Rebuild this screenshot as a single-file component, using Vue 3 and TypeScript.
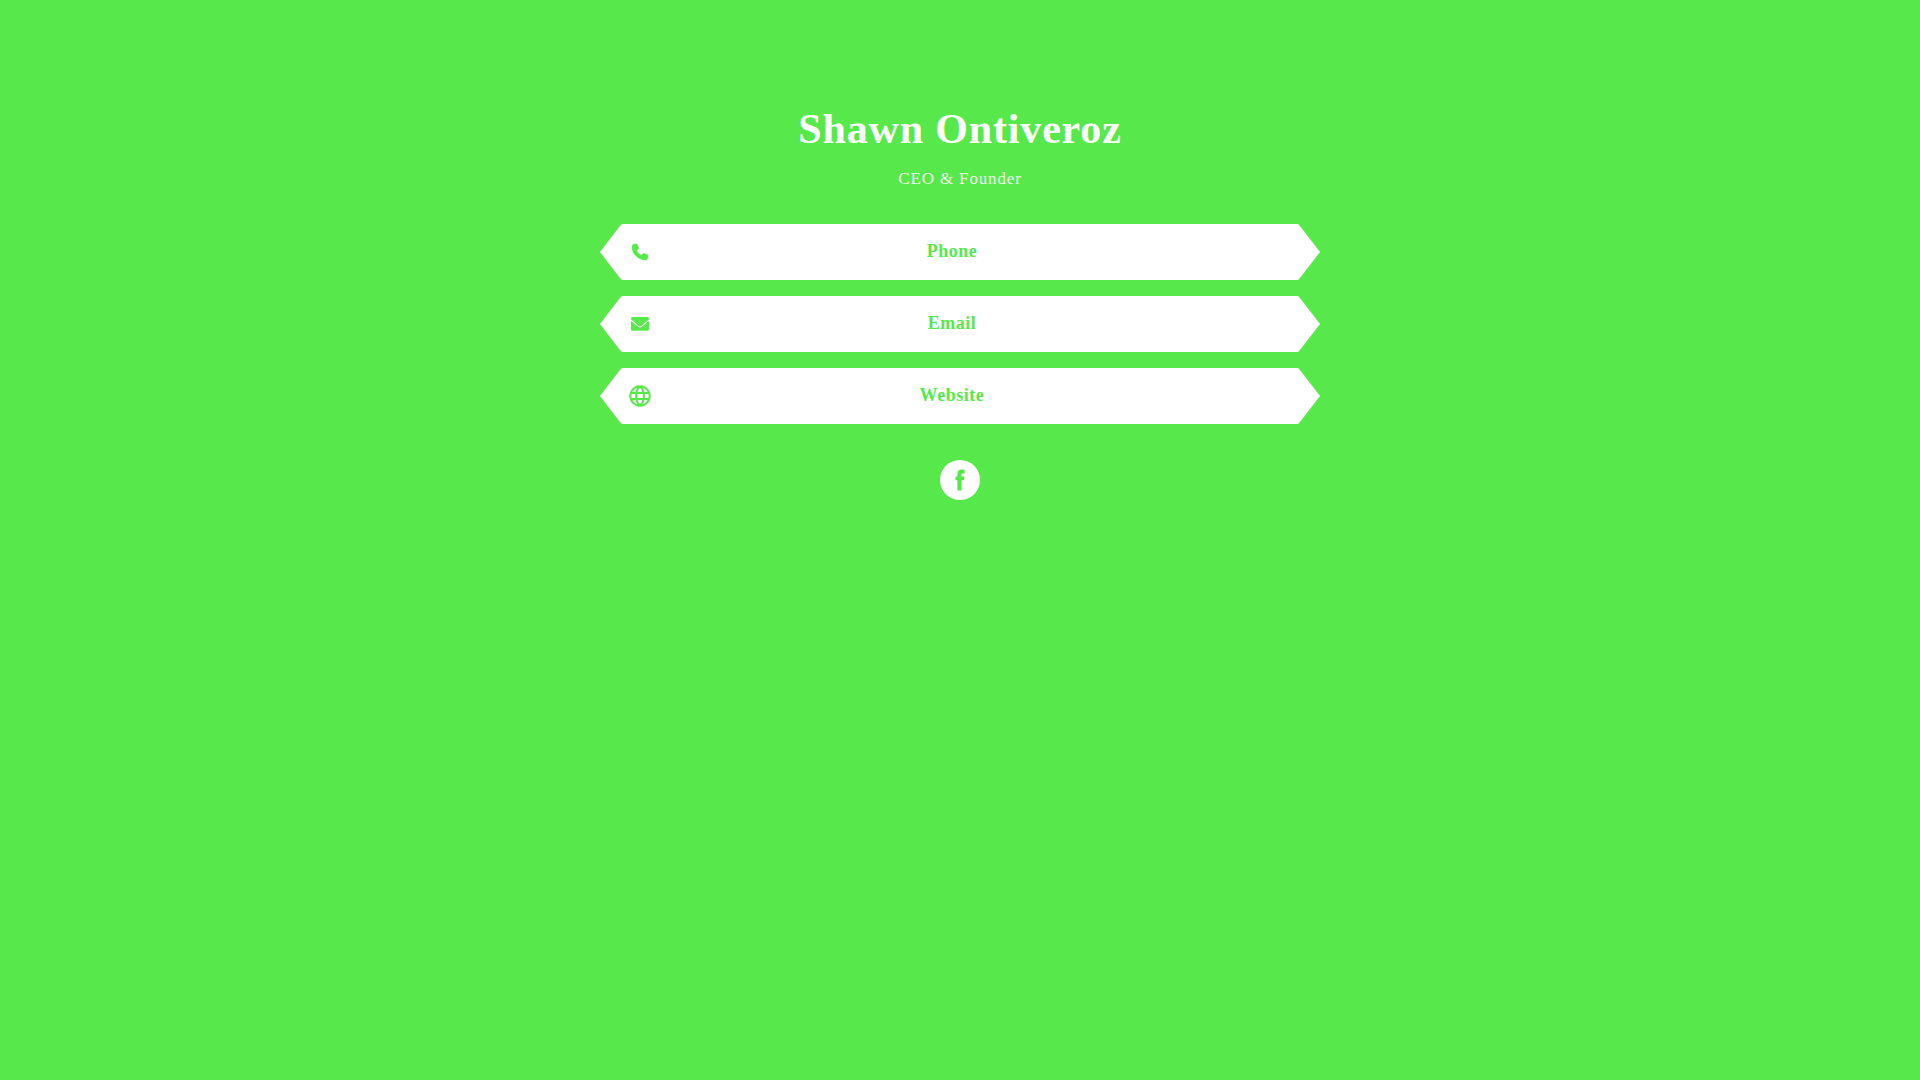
<script setup lang="ts">
interface ContactLink {
  label: string
  href: string
  viewBox: string
  size: number
  path: string
  variant: 'solid' | 'rounded' | 'stroked'
}

const links: ContactLink[] = [
  {
    label: 'Phone',
    href: '#phone',
    viewBox: '0 0 512 512',
    size: 16,
    variant: 'rounded',
    path: 'M164.9 24.6c-7.7-18.6-28-28.5-47.4-23.2l-88 24C12.1 30.2 0 46 0 64C0 311.4 200.6 512 448 512c18 0 33.8-12.1 38.6-29.5l24-88c5.3-19.4-4.6-39.7-23.2-47.4l-96-40c-16.3-6.8-35.2-2.1-46.3 11.6L304.7 368C234.3 334.7 177.3 277.7 144 207.3L193.3 167c13.7-11.2 18.4-30 11.6-46.3l-40-96z',
  },
  {
    label: 'Email',
    href: '#email',
    viewBox: '0 0 18 18',
    size: 18,
    variant: 'solid',
    path: 'M1.5 2h15Q18 2 18 3.5V4.2L10.2 10.9Q9 11.8 7.8 10.9L0 4.2V3.5Q0 2 1.5 2ZM0 5.7L7.1 11.7Q9 13.2 10.9 11.7L18 5.7V14.3Q18 15.8 16.5 15.8H1.5Q0 15.8 0 14.3Z',
  },
  {
    label: 'Website',
    href: '#website',
    viewBox: '0 0 22 22',
    size: 22,
    variant: 'stroked',
    path: 'M11 1.3a9.7 9.7 0 1 0 0 19.4a9.7 9.7 0 1 0 0-19.4ZM11 1.3C5.8 6 5.8 16 11 20.7M11 1.3C16.2 6 16.2 16 11 20.7M2 8h18M2 14h18',
  },
]
</script>

<template>
  <main class="page">
    <div class="card">
      <h1 class="name">Shawn Ontiveroz</h1>
      <p class="role">CEO &amp; Founder</p>
      <nav class="links" aria-label="Contact">
        <a v-for="link in links" :key="link.label" class="link" :href="link.href">
          <span class="icon">
            <svg
              :class="link.variant"
              :width="link.size"
              :height="link.size"
              :viewBox="link.viewBox"
              aria-hidden="true"
            >
              <path :d="link.path" />
            </svg>
          </span>
          <span class="label">{{ link.label }}</span>
        </a>
      </nav>
      <a class="social" href="#facebook" aria-label="Facebook">
        <svg width="40" height="40" viewBox="0 0 40 40" aria-hidden="true">
          <circle cx="20" cy="20" r="20" fill="#fff" />
          <path
            class="glyph"
            d="M17.4 30.6V20.2H15.5V16.4H17.4V14C17.4 11 18.8 9.6 21.4 9.6C22.6 9.6 23.8 9.7 24.6 10V13.4H23C21.9 13.4 21.6 13.9 21.6 14.8V16.4H24.4L24 20.2H21.6V30.6Z"
          />
        </svg>
      </a>
    </div>
  </main>
</template>

<style>
body {
  margin: 0;
  background: #57e94b;
}
</style>

<style scoped>
.page {
  display: flex;
  justify-content: center;
  min-height: 100vh;
  box-sizing: border-box;
  padding: 104px 16px 40px;
  background: #57e94b;
  color: #fff;
  font-family: "Liberation Serif", "Times New Roman", serif;
}

.card {
  display: flex;
  flex-direction: column;
  align-items: center;
  width: 100%;
  max-width: 720px;
}

.name {
  margin: 0;
  font-size: 42px;
  font-weight: 700;
  line-height: 50px;
  letter-spacing: 0.02em;
  text-align: center;
}

.role {
  margin: 15px 0 0;
  font-size: 17px;
  line-height: 20px;
  letter-spacing: 0.05em;
  opacity: 0.9;
}

.links {
  display: flex;
  flex-direction: column;
  gap: 16px;
  width: 100%;
  margin-top: 35px;
}

.link {
  display: flex;
  align-items: center;
  height: 56px;
  box-sizing: border-box;
  padding: 0 72px 0 24px;
  background: #fff;
  color: #57e94b;
  text-decoration: none;
  clip-path: polygon(3% 0, 97% 0, 100% 50%, 97% 100%, 3% 100%, 0 50%);
}

.icon {
  display: flex;
  justify-content: center;
  width: 32px;
}

.icon svg {
  display: block;
  overflow: visible;
  fill: currentColor;
}

.icon .rounded {
  stroke: currentColor;
  stroke-width: 24;
}

.icon .stroked {
  fill: none;
  stroke: currentColor;
  stroke-width: 2;
}

.label {
  flex: 1;
  padding-bottom: 2px;
  font-size: 18px;
  font-weight: 700;
  line-height: 24px;
  letter-spacing: 0.03em;
  text-align: center;
}

.social {
  display: block;
  margin-top: 36px;
}

.social svg {
  display: block;
}

.glyph {
  fill: #57e94b;
}
</style>
